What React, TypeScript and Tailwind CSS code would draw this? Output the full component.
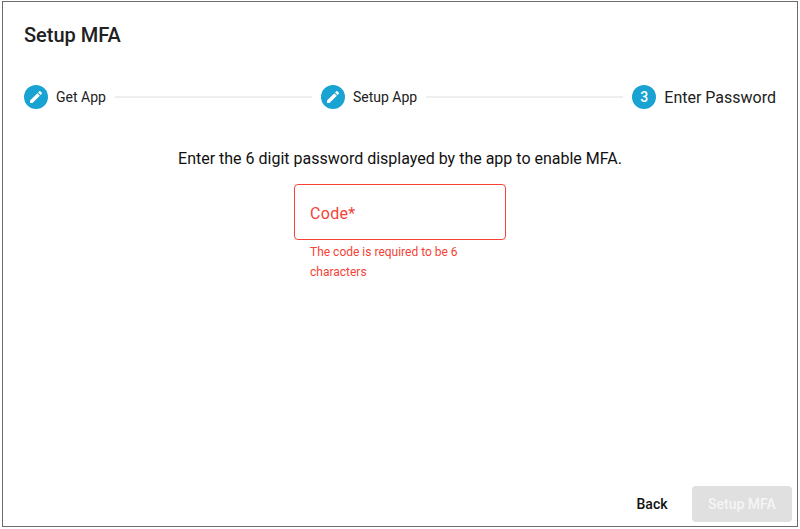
function EditIcon() {
  return (
    <svg viewBox="0 0 24 24" className="h-4 w-4" fill="white">
      <path d="M3 17.25V21h3.75L17.81 9.94l-3.75-3.75L3 17.25zM20.71 7.04c.39-.39.39-1.02 0-1.41l-2.34-2.34c-.39-.39-1.02-.39-1.41 0l-1.83 1.83 3.75 3.75 1.83-1.83z" />
    </svg>
  );
}

function StepIcon({ n }: { n?: number }) {
  return (
    <div className="flex h-6 w-6 shrink-0 items-center justify-center rounded-full bg-[#18a3d3] text-sm font-medium text-white">
      {n ? n : <EditIcon />}
    </div>
  );
}

export default function App() {
  return (
    <div className="h-[529px] w-[800px] bg-white pt-[1px] pr-[2px] pb-[2px] pl-[2px] font-['Roboto',sans-serif]">
      <div className="flex h-full w-full flex-col border border-[#6b6b6b] bg-white">
        <h2 className="ml-[21px] mt-[19px] text-[20px] leading-[28px] font-medium text-[#212121]">Setup MFA</h2>

        <div className="ml-[21px] mr-[21px] mt-[36px] flex h-6 items-center">
          <StepIcon />
          <span className="ml-2 text-[14px] text-[#212121]">Get App</span>
          <div className="mx-[9px] h-[2px] flex-1 bg-[#eeeeee]" />
          <StepIcon />
          <span className="ml-2 text-[14px] text-[#212121]">Setup App</span>
          <div className="mx-[9px] h-[2px] flex-1 bg-[#eeeeee]" />
          <StepIcon n={3} />
          <span className="ml-2 pt-[2px] text-[16px] leading-[22px] text-[#212121]">Enter Password</span>
        </div>

        <p className="mt-[38px] text-center text-[16px] leading-[24px] text-[#111]">
          Enter the 6 digit password displayed by the app to enable MFA.
        </p>

        <div className="mx-auto mt-[13px] w-[212px]">
          <div className="flex h-14 items-center rounded border border-[#f44336] px-[15px]">
            <span className="pt-[4px] text-[16px] tracking-[0.3px] text-[#f44336]">Code*</span>
          </div>
          <p className="mt-[2px] px-[16px] text-[12px] leading-[20px] text-[#f44336]">
            The code is required to be 6 characters
          </p>
        </div>

        <div className="mt-auto mb-[4px] mr-[5px] flex items-center justify-end gap-2">
          <button className="h-9 w-[64px] text-[14px] font-medium text-[#111]">Back</button>
          <button className="h-9 w-[100px] rounded bg-[#e0e0e0] text-[14px] font-medium text-[#f5f5f5]">Setup MFA</button>
        </div>
      </div>
    </div>
  );
}
